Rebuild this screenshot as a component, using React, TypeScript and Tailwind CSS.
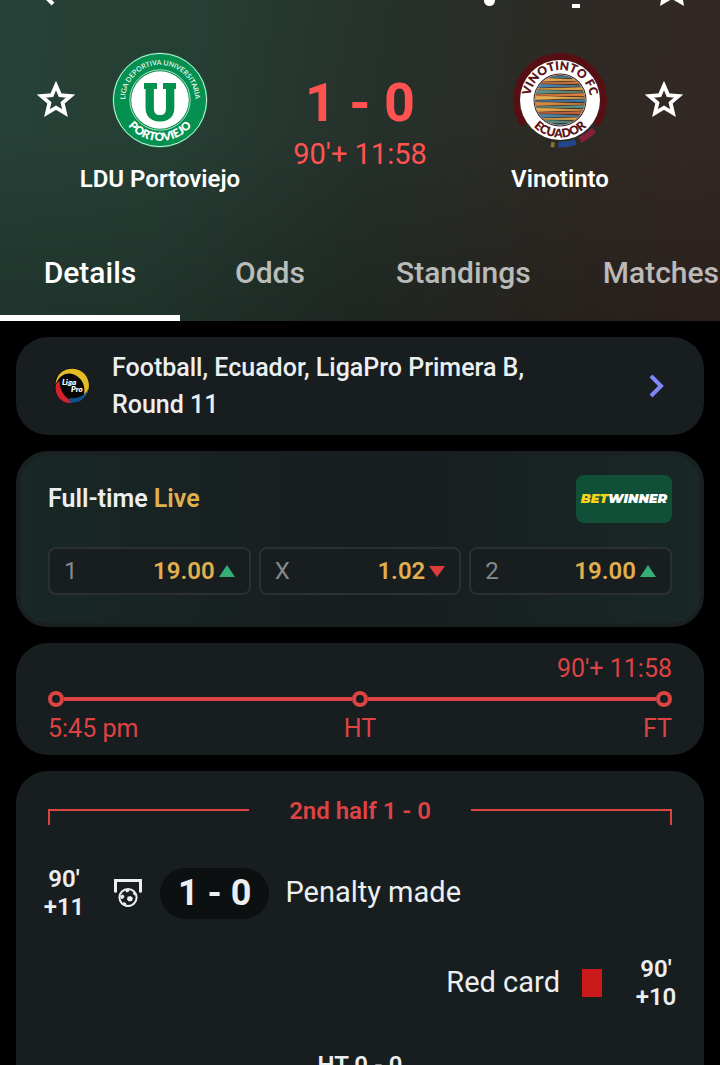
import { ReactNode, useState } from "react";

const TABS = ["Details", "Odds", "Standings", "Matches"];

const ODDS = [
  { label: "1", value: "19.00", up: true },
  { label: "X", value: "1.02", up: false },
  { label: "2", value: "19.00", up: true },
];

const StarIcon = () => (
  <svg viewBox="0 0 40 40" className="h-10 w-10" fill="none">
    <path
      d="M20 5.5 L24.1 15.1 L34.6 16 L26.6 22.9 L29 33.1 L20 27.7 L11 33.1 L13.4 22.9 L5.4 16 L15.9 15.1 Z"
      stroke="white"
      strokeWidth="3.8"
    />
  </svg>
);

const PortoviejoLogo = () => (
  <svg viewBox="0 0 96 96" className="h-24 w-24">
    <defs>
      <path id="ldu-top" d="M13.8 55.3 A35 35 0 1 1 82.2 55.3" />
      <path id="ldu-bottom" d="M7 48 A41 41 0 0 0 89 48" />
    </defs>
    <circle cx="48" cy="48" r="47.5" fill="#04904f" />
    <circle cx="48" cy="48" r="46.6" fill="none" stroke="#d8f0e2" strokeWidth="1" />
    <circle cx="48" cy="48" r="30.2" fill="none" stroke="#d8f0e2" strokeWidth="0.8" />
    <circle cx="48" cy="48" r="28.8" fill="white" />
    <text fontFamily="Lato, sans-serif" fontSize="7" fontWeight="500" fill="white">
      <textPath href="#ldu-top" startOffset="50%" textAnchor="middle">
        LIGA DEPORTIVA UNIVERSITARIA
      </textPath>
    </text>
    <text fontFamily="Lato, sans-serif" fontSize="11.5" fontWeight="800" fill="white">
      <textPath href="#ldu-bottom" startOffset="50%" textAnchor="middle">
        PORTOVIEJO
      </textPath>
    </text>
    <text
      x="48"
      y="69"
      textAnchor="middle"
      fontFamily="Roboto, sans-serif"
      fontSize="52"
      fontWeight="800"
      fill="#04904f"
    >
      U
    </text>
    <rect x="32" y="31" width="13" height="6" fill="#04904f" />
    <rect x="51" y="31" width="13" height="6" fill="#04904f" />
  </svg>
);

const STRIPES = [
  "#d99a3c", "#3f7c8c", "#e0a650", "#c9743e", "#4b7f9b", "#dda545", "#5d8f86", "#d9823f", "#e3ac52",
  "#3f7799", "#d08a45", "#5c9184", "#e0a24a", "#c2643f", "#4b86a0", "#d3a24d", "#56907c", "#4680a0",
];

const VinotintoLogo = () => (
  <svg viewBox="0 0 96 96" className="h-24 w-24">
    <defs>
      <path id="vin-top" d="M18 48 A30 30 0 0 1 78 48" />
      <path id="vin-bottom" d="M10.5 48 A37.5 37.5 0 0 0 85.500 48" />
      <clipPath id="vin-ball">
        <circle cx="48" cy="48" r="25" />
      </clipPath>
    </defs>
    <path d="M12 72.500 A43.500 43.500 0 1 1 84 72.500" fill="none" stroke="#570f14" strokeWidth="7" />
    <path d="M68 88 A44 44 0 0 0 82 78" fill="none" stroke="#84203a" strokeWidth="6" />
    <path d="M46.500 92.500 A45 45 0 0 0 64 90" fill="none" stroke="#22468a" strokeWidth="6" />
    <path d="M39 92.500 L42.500 93" stroke="#8f7434" strokeWidth="5" />
    <circle cx="48" cy="48" r="40" fill="white" />
    <circle cx="48" cy="48" r="26.5" fill="#3b1d1c" />
    <circle cx="48" cy="48" r="25.5" fill="white" />
    <g clipPath="url(#vin-ball)">
      <rect x="20" y="20" width="56" height="56" fill="#3b1d1c" />
      {STRIPES.map((color, i) => (
        <path
          key={i}
          d={
            i % 2
              ? `M20 ${22 + i * 3} L76 ${20.5 + i * 3} V${23 + i * 3} Z`
              : `M20 ${20 + i * 3} L76 ${22 + i * 3} L20 ${23.5 + i * 3} Z`
          }
          fill={color}
          stroke={color}
          strokeWidth="0.8"
        />
      ))}
    </g>
    <g fontFamily="Lato, sans-serif" fontSize="12" fontWeight="800" fill="#5c1419">
      <text>
        <textPath href="#vin-top" startOffset="50%" textAnchor="middle">
          VINOTINTO FC
        </textPath>
      </text>
      <text>
        <textPath href="#vin-bottom" startOffset="50%" textAnchor="middle">
          ECUADOR
        </textPath>
      </text>
    </g>
  </svg>
);

const LigaProLogo = () => (
  <svg viewBox="0 0 36 36" className="h-9 w-9 shrink-0">
    <circle cx="18" cy="18" r="17.5" fill="#070708" />
    <path
      d="M1.5 17 C2 6 10 0.5 19 0.8 C28 1.5 35 8 35 18 C34.5 24 32 28 29 30 C33 20 29 8 16 5.500 C9 5 4 10 1.500 17 Z"
      fill="#e3bd22"
    />
    <path
      d="M1.5 18 C1 28 7 34 15 35.2 C18 35 19 34.5 20 33.5 C12 31 6 25 5.500 13 C3 14 2 16 1.500 18 Z"
      fill="#d8202b"
    />
    <path d="M16 34.5 C25 36.5 33 30 34.5 20 C32 27 25 31 16 30 C14 31 14 33 16 34.500 Z" fill="#124f8d" />
    <g fontFamily="Lato, sans-serif" fontSize="8" fontWeight="800" fontStyle="italic" fill="white">
      <text x="8" y="17">Liga</text>
      <text x="17" y="24">Pro</text>
    </g>
  </svg>
);

const PenaltyIcon = () => (
  <svg viewBox="0 0 28 28" className="h-7 w-7" fill="none">
    <path d="M1.5 13.5 V1.5 H26.5 V13.5" stroke="#eceff0" strokeWidth="3" />
    <circle cx="14" cy="18.500" r="8.600" stroke="#eceff0" strokeWidth="2" />
    <g fill="#eceff0">
      <path d="M13.600 17.800 L16.500 17 L19 19 L18 22 L14.800 22.500 L13 20.500 Z" />
      <path d="M11 11 L15.500 10.500 L15 12.500 L12.500 13.500 Z" />
      <path d="M6 17 L8.500 15.500 L10.500 17 L9.500 19.500 L7 20 Z" />
      <path d="M9.500 23 L12 24 L12.500 26.500 L9 25 Z" />
      <path d="M19.500 13 L22 16 L20.500 16.500 L18.800 14.500 Z" />
    </g>
  </svg>
);

const Team = ({ name, children }: { name: string; children: ReactNode }) => (
  <div className="flex flex-col items-center gap-4">
    {children}
    <span className="text-2xl/[30px] font-semibold whitespace-nowrap text-white">{name}</span>
  </div>
);

const EventTime = ({ added }: { added: number }) => (
  <div className="w-16 shrink-0 text-center text-2xl/7 font-semibold">
    90'
    <br />+{added}
  </div>
);

const Header = () => {
  const [active, setActive] = useState("Details");

  return (
    <header className="shrink-0 bg-[linear-gradient(180deg,transparent_40%,rgba(0,0,0,0.2)),linear-gradient(100deg,#264137_0%,#263f35_25%,#26302a_52%,#2e2a25_75%,#352723_100%)]">
      {/* bottom edge of the scrolled app bar */}
      <svg viewBox="0 0 720 8" className="h-2 w-full" fill="none" stroke="white">
        <path d="M44 -5 L53 4" strokeWidth="4" />
        <circle cx="489.5" cy="0.5" r="5.5" fill="white" stroke="none" />
        <path d="M572 6 H580" strokeWidth="4" />
        <path d="M660 6 L661 0 L672 -7 L683 0 L684 6 L672 -1 Z" fill="white" stroke="none" />
      </svg>
      <div className="grid grid-cols-[40px_168px_1fr_168px_40px] px-9 pt-11">
        <button aria-label="Follow LDU Portoviejo" className="mt-7 h-10">
          <StarIcon />
        </button>
        <Team name="LDU Portoviejo">
          <PortoviejoLogo />
        </Team>
        <div className="flex flex-col items-center pt-5 whitespace-nowrap text-[#ff5251]">
          <span className="text-[54px]/[62px] font-bold">1 - 0</span>
          <span className="text-[29px]/10">90'+ 11:58</span>
        </div>
        <Team name="Vinotinto">
          <VinotintoLogo />
        </Team>
        <button aria-label="Follow Vinotinto" className="mt-7 h-10">
          <StarIcon />
        </button>
      </div>
      <nav className="mt-[30px] flex overflow-hidden">
        {TABS.map((tab) => (
          <button
            key={tab}
            onClick={() => setActive(tab)}
            className={
              tab === active
                ? "h-[97px] min-w-[180px] shrink-0 border-b-6 border-white px-9 pt-1.5 text-[30px] font-medium text-white"
                : "h-[97px] min-w-[180px] shrink-0 border-b-6 border-transparent px-9 pt-1.5 text-[30px] font-medium text-white/70"
            }
          >
            {tab}
          </button>
        ))}
      </nav>
    </header>
  );
};

const OddsCard = () => (
  <section className="flex shrink-0 flex-col gap-6 rounded-[32px] border-4 border-[#1a2022] bg-[linear-gradient(90deg,#182825_0%,#181d20_48%,#181d20_54%,#182825_100%)] px-7 pt-5 pb-7">
    <div className="flex items-center justify-between">
      <h2 className="text-[25px]/8 font-semibold">
        Full-time <span className="text-[#e0b04e]">Live</span>
      </h2>
      <a
        href="#betwinner"
        className="flex h-12 w-24 items-center justify-center rounded-lg bg-[#115038] font-[Montserrat,Inter,sans-serif] text-[13px] font-black text-white italic"
      >
        <span className="text-[#f5d21c]">BET</span>WINNER
      </a>
    </div>
    <div className="grid grid-cols-3 gap-2">
      {ODDS.map(({ label, value, up }) => (
        <button
          key={label}
          className="flex h-12 items-center rounded-lg border-2 border-[#2b3033] bg-[#181d20] px-3.5 text-2xl"
        >
          <span className="text-[#86898b]">{label}</span>
          <span className="ml-auto font-semibold text-[#e0b04e]">{value}</span>
          <svg viewBox="0 0 16 12" className="ml-1 h-3 w-4">
            {up ? <path d="M0 12 L8 0 L16 12 Z" fill="#34ae72" /> : <path d="M0 1 H16 L8 12 Z" fill="#e13c3c" />}
          </svg>
        </button>
      ))}
    </div>
  </section>
);

const Timeline = () => (
  <section className="flex shrink-0 flex-col gap-2 rounded-[32px] bg-[#181d20] px-8 py-3 text-[25px]/7 text-[#de4343]">
    <div className="text-right">90'+ 11:58</div>
    <div className="flex items-center">
      <span className="size-4 rounded-full border-4 border-[#de4343]" />
      <span className="h-1 flex-1 bg-[#de4343]" />
      <span className="size-4 rounded-full border-4 border-[#de4343]" />
      <span className="h-1 flex-1 bg-[#de4343]" />
      <span className="size-4 rounded-full border-4 border-[#de4343]" />
    </div>
    <div className="grid grid-cols-3">
      <span>5:45 pm</span>
      <span className="text-center">HT</span>
      <span className="text-right">FT</span>
    </div>
  </section>
);

const Incidents = () => (
  <section className="min-h-0 flex-1 overflow-hidden rounded-t-[32px] bg-[#181d20] px-4 pt-6">
    <div className="flex items-center px-4 text-[#de4343]">
      <span className="mt-3 h-4 flex-1 border-t-2 border-l-2 border-[#de4343]" />
      <h2 className="px-10 text-2xl/8 font-semibold">2nd half 1 - 0</h2>
      <span className="mt-3 h-4 flex-1 border-t-2 border-r-2 border-[#de4343]" />
    </div>
    <div className="mt-[38px] flex items-center">
      <EventTime added={11} />
      <div className="flex w-16 shrink-0 justify-center">
        <PenaltyIcon />
      </div>
      <span className="rounded-full bg-[#0c1011] px-[18px] text-4xl/[51px] font-bold">1 - 0</span>
      <span className="ml-4 text-[29px]">Penalty made</span>
    </div>
    <div className="mt-[34px] flex items-center justify-end">
      <span className="text-[29px]">Red card</span>
      <div className="flex w-16 shrink-0 justify-center">
        <span className="h-7 w-5 bg-[#cb1a1a]" />
      </div>
      <EventTime added={10} />
    </div>
    <h2 className="mt-[38px] text-center text-2xl/8 font-semibold">HT 0 - 0</h2>
  </section>
);

export default function App() {
  return (
    <div className="flex h-screen flex-col overflow-hidden bg-black font-[Roboto,sans-serif] text-[#eceff0]">
      <Header />
      <main className="flex min-h-0 flex-1 flex-col gap-4 px-4 pt-4">
        <a href="#league" className="flex shrink-0 items-center rounded-[32px] bg-[#181d20] py-3 pr-10 pl-[38px]">
          <LigaProLogo />
          <span className="ml-[22px] max-w-[440px] text-[25px]/[37px] font-medium">
            Football, Ecuador, LigaPro Primera B, Round 11
          </span>
          <svg viewBox="0 0 16 24" className="ml-auto h-6 w-4" fill="none">
            <path d="M3 2 L13 12 L3 22" stroke="#7f87f5" strokeWidth="4" />
          </svg>
        </a>
        <OddsCard />
        <Timeline />
        <Incidents />
      </main>
    </div>
  );
}
